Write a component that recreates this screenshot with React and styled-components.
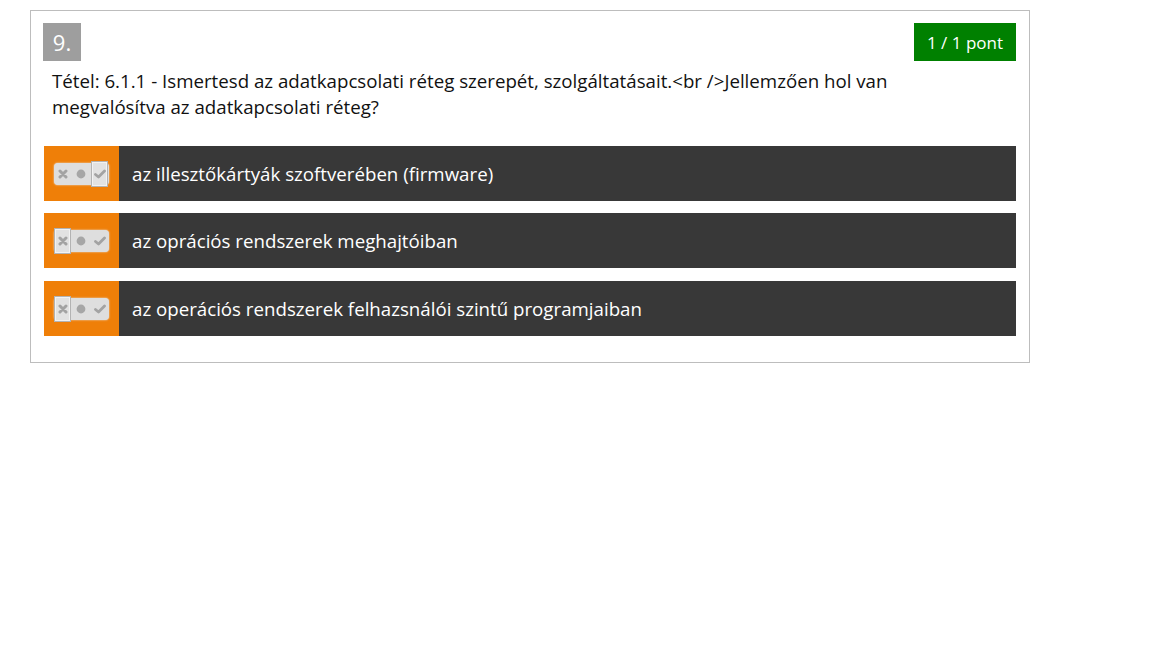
import React from 'react';
import styled, { createGlobalStyle } from 'styled-components';

const GlobalStyle = createGlobalStyle`
  body {
    margin: 0;
    background: #fff;
    font-family: "Open Sans", "Noto Sans", "Liberation Sans", sans-serif;
  }
`;

const Page = styled.div`
  padding: 10px 30px;
`;

const Card = styled.div`
  width: 1000px;
  box-sizing: border-box;
  border: 1px solid #bdbdbd;
  padding: 12px 13px 26px 12px;
`;

const Header = styled.div`
  display: flex;
  justify-content: space-between;
  align-items: flex-start;
`;

const Number = styled.div`
  width: 38px;
  height: 38px;
  background: #9e9e9e;
  color: #fff;
  font-size: 22px;
  display: flex;
  align-items: center;
  justify-content: center;
`;

const Points = styled.div`
  height: 38px;
  padding: 0 13px;
  background: #008000;
  color: #fff;
  font-size: 17px;
  display: flex;
  align-items: center;
`;

const Question = styled.div`
  margin: 7px 0 26px 9px;
  font-size: 18.7px;
  line-height: 26px;
  color: #111;
  max-width: 900px;
`;

const Options = styled.div`
  display: flex;
  flex-direction: column;
  gap: 12px;
  margin-left: 1px;
`;

const Option = styled.div`
  display: flex;
  height: 55px;
  margin-top: ${p => (p.$last ? '1px' : '0')};
  background: #383838;
`;

const Marker = styled.div`
  width: 75px;
  flex-shrink: 0;
  background: #ef7f08;
  display: flex;
  align-items: center;
  justify-content: center;
`;

const Track = styled.div`
  width: 55px;
  height: 22px;
  border-radius: 4px;
  background: #dedede;
  box-shadow: 0 0 2px #e8e8e8;
  display: flex;
  align-items: center;
`;

const Cell = styled.div`
  width: ${p => (p.$wide ? '20px' : '17px')};
  height: ${p => (p.$active ? '26px' : '22px')};
  box-sizing: border-box;
  border: ${p => (p.$active ? '1px solid #b3b3b3' : 'none')};
  box-shadow: ${p => (p.$active ? 'inset 0 0 0 1px #f2f2f2' : 'none')};
  background: ${p => (p.$active ? '#e2e2e2' : 'transparent')};
  display: flex;
  align-items: center;
  justify-content: center;
  filter: blur(0.4px);
`;

const Label = styled.div`
  display: flex;
  align-items: center;
  padding-left: 13px;
  color: #fff;
  font-size: 18.7px;
`;

function CrossIcon() {
  return (
    <svg width="10" height="10" viewBox="0 0 10 10">
      <path d="M2 2 L8 8 M8 2 L2 8" stroke="#a3a3a3" strokeWidth="3" strokeLinecap="round" />
    </svg>
  );
}

function DotIcon() {
  return (
    <svg width="10" height="10" viewBox="0 0 10 10">
      <circle cx="5" cy="5" r="4.4" fill="#a6a6a6" />
    </svg>
  );
}

function CheckIcon() {
  return (
    <svg width="12" height="10" viewBox="0 0 12 10">
      <path d="M1.5 5.5 L4.5 8 L10.5 2" stroke="#a3a3a3" strokeWidth="2.8" fill="none" strokeLinecap="round" strokeLinejoin="round" />
    </svg>
  );
}

function Toggle({ state }) {
  return (
    <Track>
      <Cell $active={state === 'no'}><CrossIcon /></Cell>
      <Cell $wide $active={state === 'none'}><DotIcon /></Cell>
      <Cell $active={state === 'yes'}><CheckIcon /></Cell>
    </Track>
  );
}

const answers = [
  { id: 1, text: 'az illesztőkártyák szoftverében (firmware)', state: 'yes' },
  { id: 2, text: 'az oprációs rendszerek meghajtóiban', state: 'no' },
  { id: 3, text: 'az operációs rendszerek felhazsnálói szintű programjaiban', state: 'no' },
];

export default function App() {
  return (
    <Page>
      <GlobalStyle />
      <Card>
        <Header>
          <Number>9.</Number>
          <Points>1 / 1 pont</Points>
        </Header>
        <Question>
          Tétel: 6.1.1 - Ismertesd az adatkapcsolati réteg szerepét, szolgáltatásait.&lt;br /&gt;Jellemzően hol van megvalósítva az adatkapcsolati réteg?
        </Question>
        <Options>
          {answers.map((a, i) => (
            <Option key={a.id} $last={i === answers.length - 1}>
              <Marker><Toggle state={a.state} /></Marker>
              <Label>{a.text}</Label>
            </Option>
          ))}
        </Options>
      </Card>
    </Page>
  );
}
